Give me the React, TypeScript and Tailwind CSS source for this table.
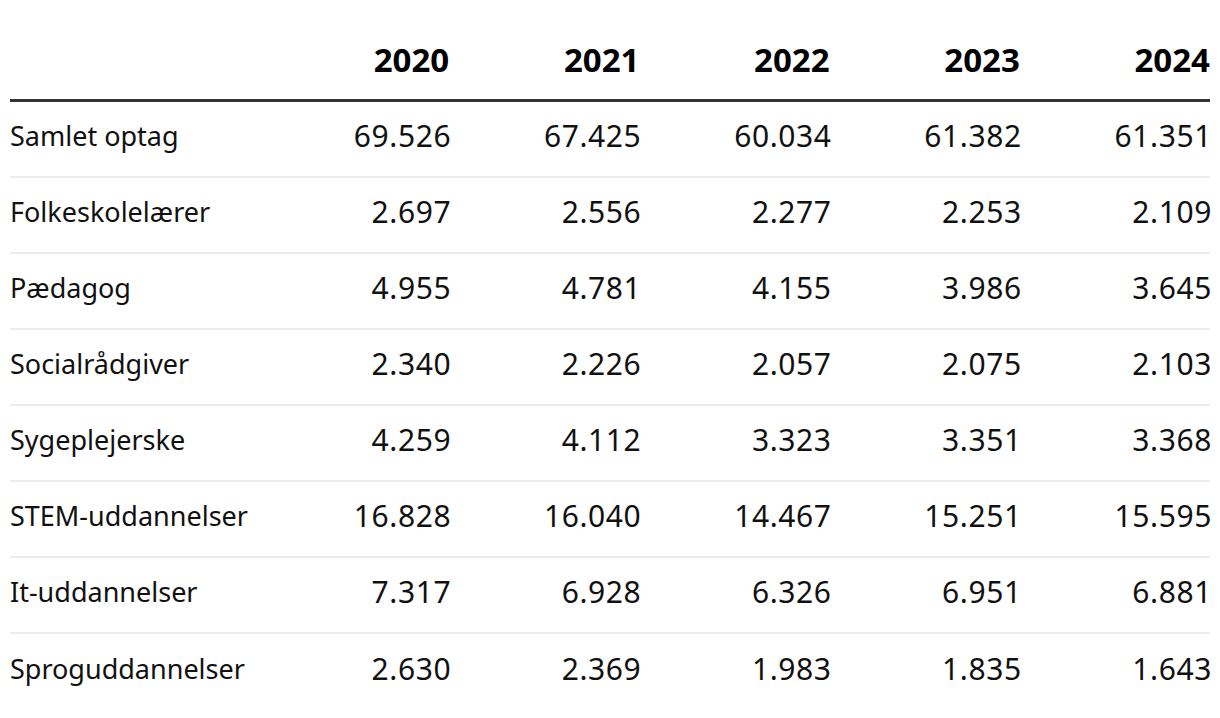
import React from "react";

const years = ["2020", "2021", "2022", "2023", "2024"];

const rows: { label: string; values: string[] }[] = [
  { label: "Samlet optag", values: ["69.526", "67.425", "60.034", "61.382", "61.351"] },
  { label: "Folkeskolelærer", values: ["2.697", "2.556", "2.277", "2.253", "2.109"] },
  { label: "Pædagog", values: ["4.955", "4.781", "4.155", "3.986", "3.645"] },
  { label: "Socialrådgiver", values: ["2.340", "2.226", "2.057", "2.075", "2.103"] },
  { label: "Sygeplejerske", values: ["4.259", "4.112", "3.323", "3.351", "3.368"] },
  { label: "STEM-uddannelser", values: ["16.828", "16.040", "14.467", "15.251", "15.595"] },
  { label: "It-uddannelser", values: ["7.317", "6.928", "6.326", "6.951", "6.881"] },
  { label: "Sproguddannelser", values: ["2.630", "2.369", "1.983", "1.835", "1.643"] },
];

const App = () => {
  return (
    <div className="min-h-[718px] bg-white px-[10px] font-['Noto_Sans',sans-serif] text-[#111]">
      <div className="grid h-[102px] grid-cols-[249px_repeat(5,1fr)] items-end border-b-[3px] border-[#333] pb-[19px]">
        <div />
        {years.map((y) => (
          <div key={y} className="text-right text-[33px] font-bold leading-[40px] text-black">
            {y}
          </div>
        ))}
      </div>
      {rows.map((row, i) => (
        <div
          key={row.label}
          className={`grid h-[76px] grid-cols-[249px_repeat(5,1fr)] items-center pb-[6px] ${
            i < rows.length - 1 ? "border-b-2 border-[#ececec]" : ""
          }`}
        >
          <div className="text-[27px] leading-[40px]">{row.label}</div>
          {row.values.map((v, j) => (
            <div
              key={j}
              className="-mr-[2px] text-right text-[30px] leading-[40px] tracking-[0.02em] tabular-nums"
            >
              {v}
            </div>
          ))}
        </div>
      ))}
    </div>
  );
};

export default App;
